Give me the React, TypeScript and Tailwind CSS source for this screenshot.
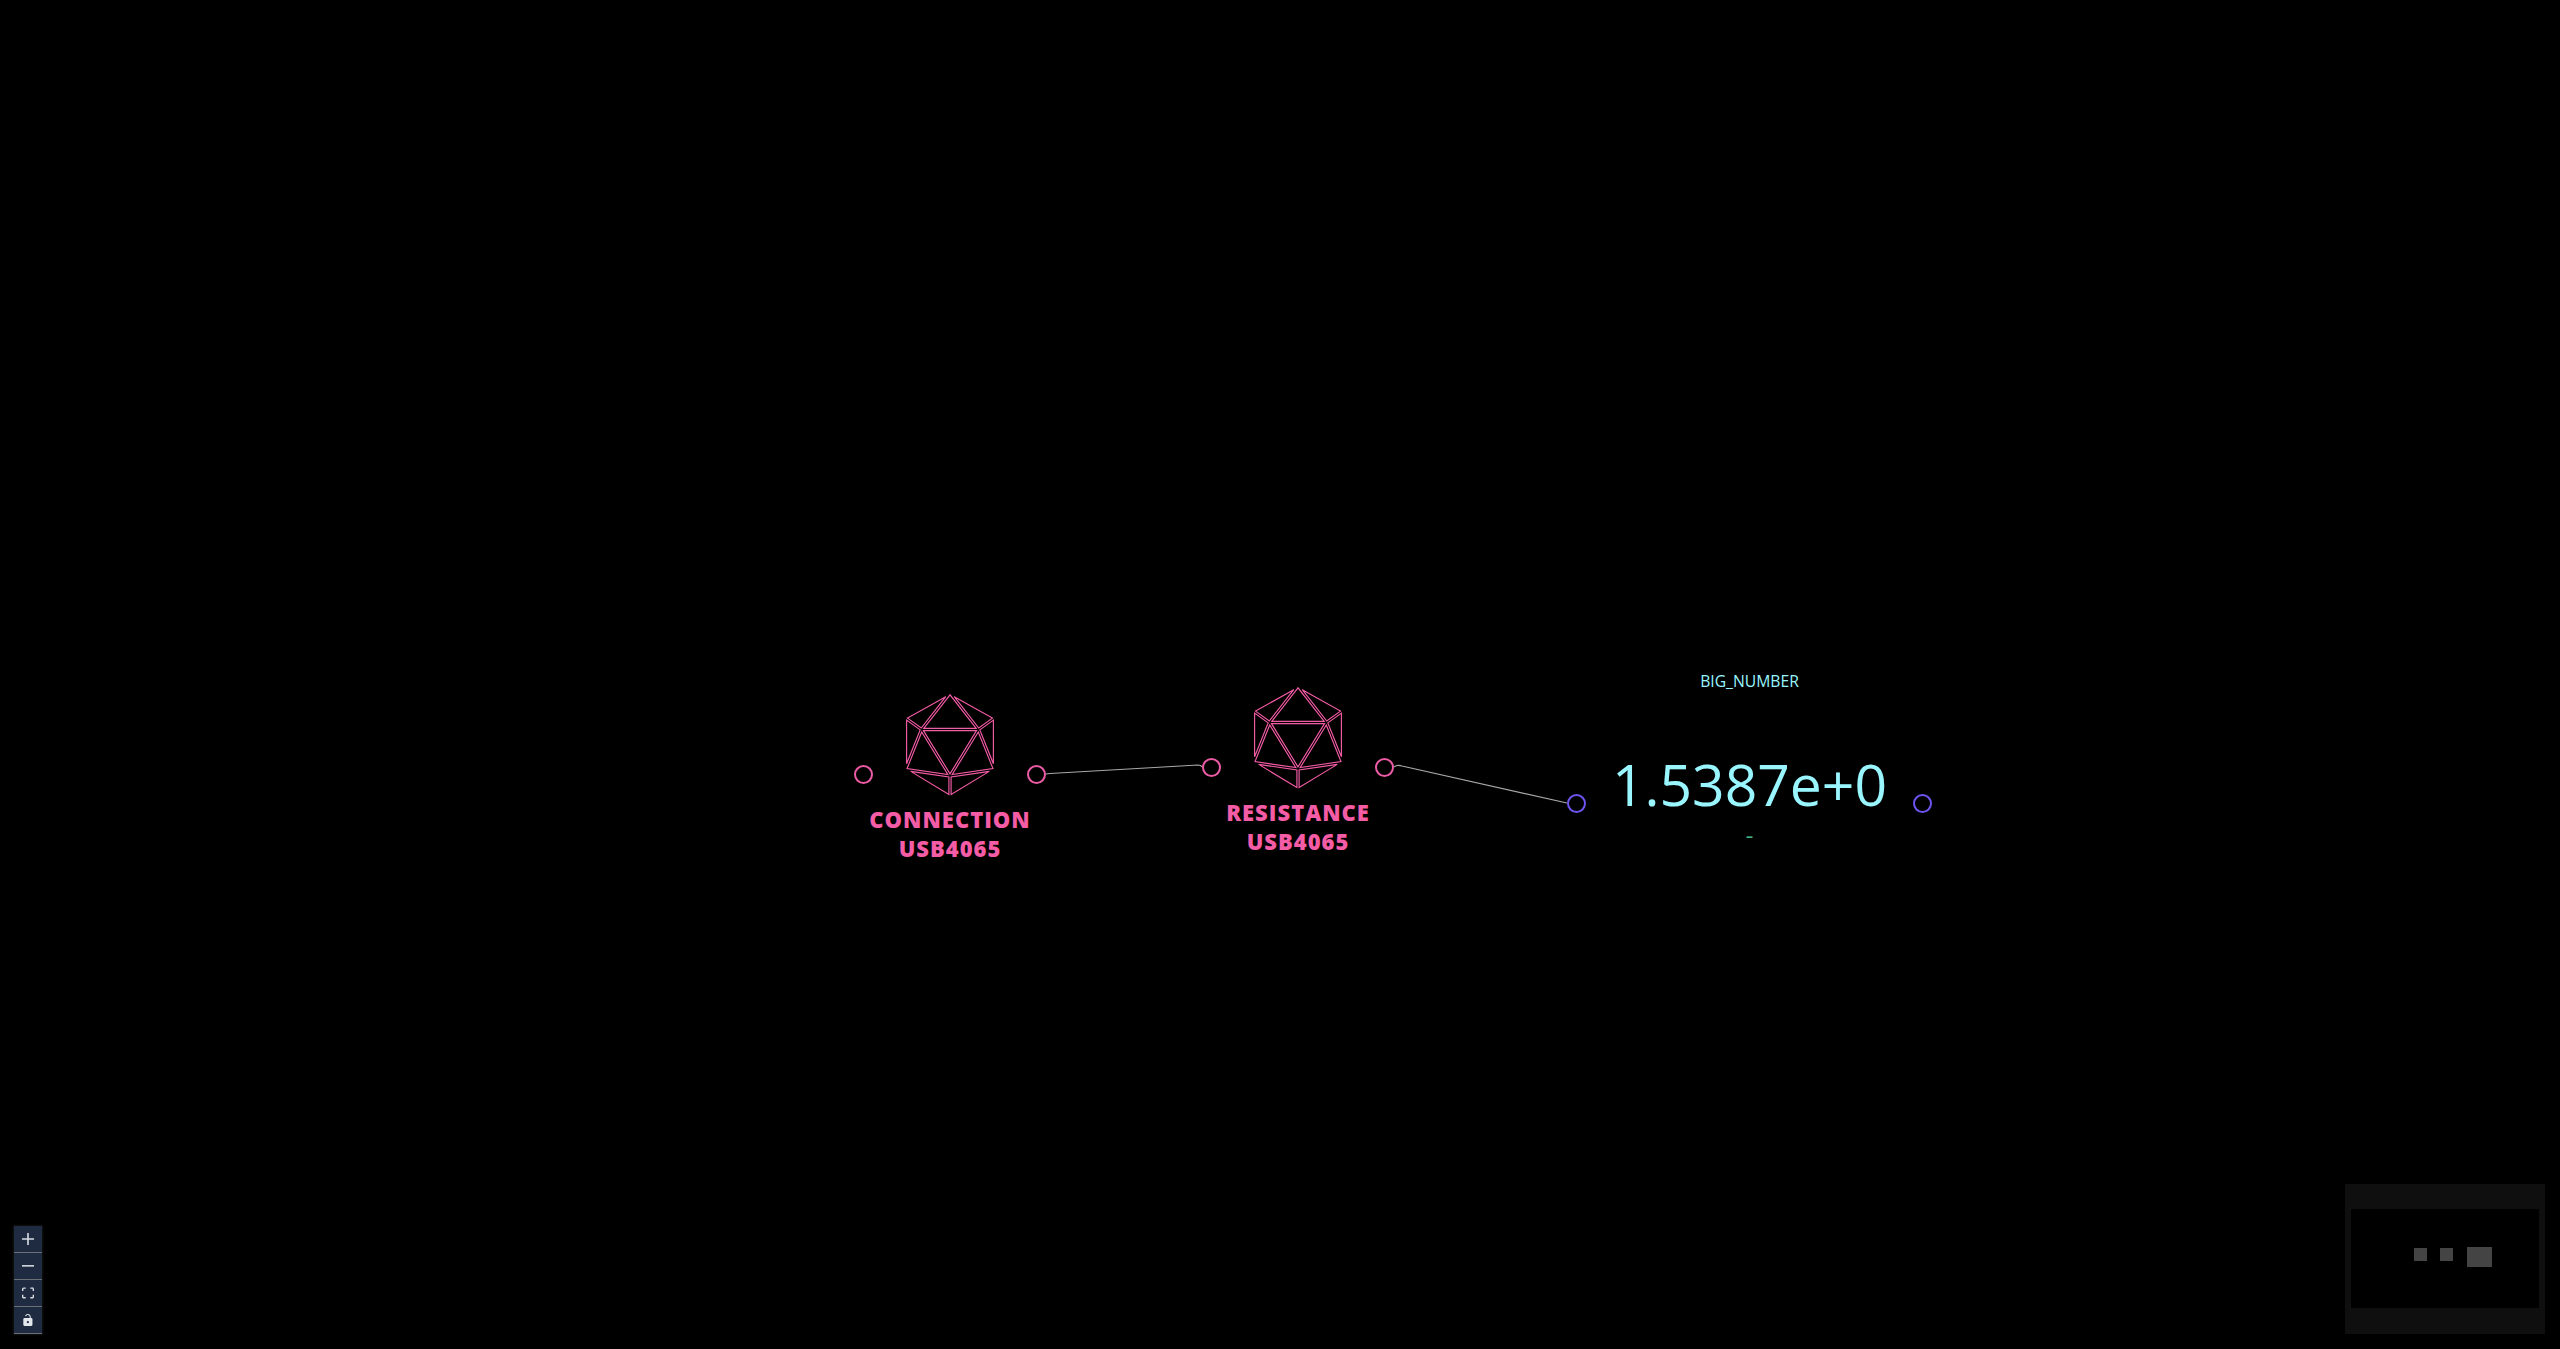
const V: Record<string, [number, number]> = {
  T: [60, 8],
  UL: [15.5, 33],
  UR: [104.5, 33],
  IL: [31.5, 44.5],
  IR: [88.5, 44.5],
  LL: [15.5, 84.5],
  LR: [104.5, 84.5],
  IB: [60, 91],
  B: [60, 111.5],
};

const FACES = [
  ["T", "UL", "IL"],
  ["T", "IL", "IR"],
  ["T", "IR", "UR"],
  ["UL", "LL", "IL"],
  ["UR", "IR", "LR"],
  ["IL", "IB", "IR"],
  ["IL", "LL", "IB"],
  ["IR", "IB", "LR"],
  ["LL", "B", "IB"],
  ["LR", "IB", "B"],
];

function insetFace(names: string[], d: number) {
  const p = names.map((n) => V[n]);
  const cx = (p[0][0] + p[1][0] + p[2][0]) / 3;
  const cy = (p[0][1] + p[1][1] + p[2][1]) / 3;
  const lines = p.map((a, i) => {
    const b = p[(i + 1) % 3];
    let nx = -(b[1] - a[1]);
    let ny = b[0] - a[0];
    const l = Math.hypot(nx, ny);
    nx /= l;
    ny /= l;
    if ((cx - a[0]) * nx + (cy - a[1]) * ny < 0) {
      nx = -nx;
      ny = -ny;
    }
    return { nx, ny, c: a[0] * nx + a[1] * ny + d };
  });
  return lines
    .map((l, i) => {
      const m = lines[(i + 2) % 3];
      const det = l.nx * m.ny - l.ny * m.nx;
      const x = (l.c * m.ny - l.ny * m.c) / det;
      const y = (l.nx * m.c - l.c * m.nx) / det;
      return `${x.toFixed(2)},${y.toFixed(2)}`;
    })
    .join(" ");
}

function Icosahedron() {
  return (
    <svg viewBox="0 0 120 120" className="block w-[120px] h-[120px]" fill="none">
      {FACES.map((f) => (
        <polygon key={f.join()} points={insetFace(f, 1.1)} stroke="#f45ca6" strokeWidth={1.15} />
      ))}
    </svg>
  );
}

function Handle({ className }: { className: string }) {
  return <div className={`absolute w-[19px] h-[19px] rounded-full border-2 bg-black ${className}`} />;
}

function IoNode({ className, title }: { className: string; title: string }) {
  return (
    <div className={`absolute w-[120px] flex flex-col items-center ${className}`}>
      <Icosahedron />
      <div className="whitespace-nowrap text-center font-extrabold text-[22px] leading-[29px] tracking-[1px] text-[#f45ca6]">
        <div>{title}</div>
        <div>USB4065</div>
      </div>
      <Handle className="left-[-36px] top-[80px] border-[#ec5ba5]" />
      <Handle className="left-[137px] top-[80px] border-[#ec5ba5]" />
    </div>
  );
}

function Controls() {
  const btn = "w-[28px] h-[27px] flex items-center justify-center bg-[#1e2b40] border-b border-[#6b6f76]";
  return (
    <div className="absolute left-[14px] top-[1226px] w-[28px] flex flex-col shadow-[0_0_2px_1px_rgba(255,255,255,0.08)]">
      <button className={btn}>
        <svg viewBox="0 0 32 32" className="w-[12px] h-[12px]" fill="#d8dce2">
          <path d="M32 18.133H18.133V32h-4.266V18.133H0v-4.266h13.867V0h4.266v13.867H32z" />
        </svg>
      </button>
      <button className={btn}>
        <svg viewBox="0 0 32 5" className="w-[12px] h-[12px]" fill="#d8dce2">
          <path d="M0 0h32v4.2H0z" />
        </svg>
      </button>
      <button className={btn}>
        <svg viewBox="0 0 32 30" className="w-[12px] h-[12px]" fill="#d8dce2">
          <path d="M3.692 4.63c0-.53.4-.938.939-.938h5.215V0H4.708C2.13 0 0 2.054 0 4.63v5.216h3.692V4.631zM27.354 0h-5.2v3.692h5.17c.53 0 .984.4.984.939v5.215H32V4.631A4.624 4.624 0 0027.354 0zm.954 24.83c0 .532-.4.94-.939.94h-5.215v3.768h5.215c2.577 0 4.631-2.13 4.631-4.707v-5.139h-3.692v5.139zm-23.677.94c-.531 0-.939-.4-.939-.94v-5.138H0v5.139c0 2.577 2.13 4.707 4.708 4.707h5.138V25.77H4.631z" />
        </svg>
      </button>
      <button className={btn}>
        <svg viewBox="0 0 25 32" className="w-[12px] h-[12px]" fill="#e4e7eb">
          <path d="M21.333 10.667H19.81V7.619C19.81 3.429 16.38 0 12.19 0 8.64 0 6.1 2.1 5 5l2.7 1.1C8.4 4.1 10 2.9 12.19 2.9c2.591 0 4.724 2.133 4.724 4.724v3.048H3.048A3.056 3.056 0 000 13.714v15.238A3.056 3.056 0 003.048 32h18.285a3.056 3.056 0 003.048-3.048V13.714a3.056 3.056 0 00-3.048-3.047zM12.19 24.533a3.056 3.056 0 01-3.047-3.047 3.056 3.056 0 013.047-3.048 3.056 3.056 0 013.048 3.048 3.056 3.056 0 01-3.048 3.047z" />
        </svg>
      </button>
    </div>
  );
}

function MiniMap() {
  return (
    <svg viewBox="0 0 200 150" className="absolute left-[2345px] top-[1184px] w-[200px] h-[150px]">
      <rect width="200" height="150" fill="#0f0f0f" />
      <rect x="6" y="25" width="188" height="99" fill="#000" />
      <rect x="69" y="64" width="13" height="13" fill="#444" />
      <rect x="95" y="64" width="13" height="13" fill="#444" />
      <rect x="122" y="63" width="25" height="20" fill="#444" />
    </svg>
  );
}

export default function App() {
  return (
    <div className="relative w-[2560px] h-[1349px] overflow-hidden bg-black font-['Open_Sans',sans-serif]">
      <svg className="absolute inset-0 w-full h-full" fill="none" stroke="#a8a8a8" strokeWidth={1.2}>
        <path d="M1046 774 L1050 773.5 L1198 765 Q1201 765 1202 767" />
        <path d="M1393.5 767 L1397 765.5 Q1399 765 1402 766 L1567 803" />
      </svg>

      <IoNode className="left-[890px] top-[685px]" title="CONNECTION" />
      <IoNode className="left-[1238px] top-[678px]" title="RESISTANCE" />

      <div className="absolute left-[1585px] top-[669px] w-[329px] flex flex-col items-center text-[#99f6ff]">
        <div className="text-[15.7px] leading-[24px] whitespace-nowrap">BIG_NUMBER</div>
        <div className="mt-[52px] text-[57px] leading-[78px] whitespace-nowrap">1.5387e+0</div>
        <div className="text-[14px] font-bold leading-[20px] mt-[3px] text-[#3fb585]">–</div>
        <Handle className="left-[-18px] top-[125px] border-[#6d55f0]" />
        <Handle className="left-[328px] top-[125px] border-[#6d55f0]" />
      </div>

      <Controls />
      <MiniMap />
    </div>
  );
}
